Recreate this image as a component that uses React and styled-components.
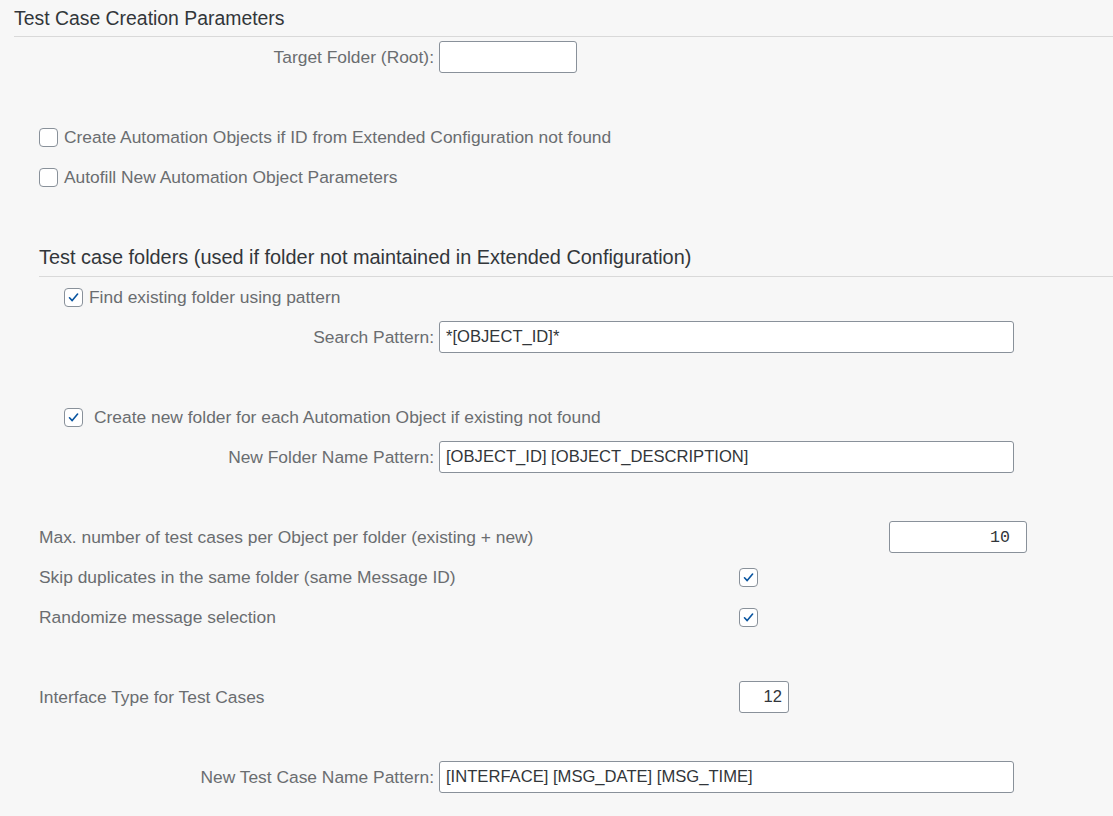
import React from 'react';
import styled, { createGlobalStyle } from 'styled-components';

const GlobalStyle = createGlobalStyle`
  html, body {
    margin: 0;
    padding: 0;
    background: #f7f7f7;
    font-family: "Liberation Sans", Arial, sans-serif;
  }
`;

const Page = styled.div`
  width: 1113px;
  height: 816px;
  overflow: hidden;
  background: #f7f7f7;
  color: #32363a;
`;

const Title = styled.div`
  margin-left: ${p => p.indent || 14}px;
  height: ${p => p.height || 37}px;
  display: flex;
  align-items: center;
  padding-top: ${p => p.padTop || 0}px;
  font-size: ${p => p.size || 19.4}px;
  color: #32363a;
  border-bottom: 1px solid #d9d9d9;
  box-sizing: border-box;
`;

const Row = styled.div`
  height: 40px;
  display: flex;
  align-items: center;
  padding-left: ${p => p.indent || 0}px;
  box-sizing: border-box;
  font-size: 17.4px;
  color: #6a6d70;
`;

const FormRow = styled.div`
  height: 40px;
  display: grid;
  grid-template-columns: 434px auto;
  column-gap: 5px;
  align-items: center;
  font-size: 17.4px;
`;

const SplitRow = styled.div`
  height: 40px;
  display: grid;
  grid-template-columns: ${p => p.at}px auto;
  align-items: center;
  padding-left: 39px;
  font-size: 17.4px;
`;

const Label = styled.label`
  color: #6a6d70;
  text-align: ${p => (p.left ? 'left' : 'right')};
  white-space: nowrap;
`;

const Input = styled.div`
  width: ${p => p.w}px;
  height: 32px;
  box-sizing: border-box;
  background: #fff;
  border: 1px solid #89919a;
  border-radius: 3px;
  display: flex;
  align-items: center;
  justify-content: ${p => (p.right ? 'flex-end' : 'flex-start')};
  padding: 0 ${p => p.pr ?? 6}px 0 6px;
  color: #32363a;
  font-size: 16.6px;
  font-family: ${p => (p.mono ? '"Liberation Mono", "DejaVu Sans Mono", monospace' : 'inherit')};
  white-space: nowrap;
`;

const Box = styled.span`
  width: 19px;
  height: 19px;
  box-sizing: border-box;
  border: 1px solid #89919a;
  border-radius: 4px;
  background: #fff;
  display: inline-flex;
  align-items: center;
  justify-content: center;
  flex-shrink: 0;
  margin-right: ${p => p.gap ?? 6}px;
`;

const Check = ({ checked, gap }) => (
  <Box gap={gap}>
    {checked && (
      <svg width="13" height="13" viewBox="0 0 13 13">
        <path d="M2.5 6.8 L5.2 9.6 L10.6 3" fill="none" stroke="#0854a0" strokeWidth="1.6" strokeLinecap="round" strokeLinejoin="round" />
      </svg>
    )}
  </Box>
);

const Spacer = styled.div`
  height: ${p => p.h}px;
`;

export default function App() {
  return (
    <Page>
      <GlobalStyle />
      <Title>Test Case Creation Parameters</Title>
      <FormRow>
        <Label>Target Folder (Root):</Label>
        <Input w={138} />
      </FormRow>
      <Spacer h={40} />
      <Row indent={39}>
        <Check />
        Create Automation Objects if ID from Extended Configuration not found
      </Row>
      <Row indent={39}>
        <Check />
        Autofill New Automation Object Parameters
      </Row>
      <Spacer h={40} />
      <Title indent={39} height={40} size={19.9} padTop={1}>
        Test case folders (used if folder not maintained in Extended Configuration)
      </Title>
      <Row indent={64}>
        <Check checked />
        Find existing folder using pattern
      </Row>
      <FormRow>
        <Label>Search Pattern:</Label>
        <Input w={575}>*[OBJECT_ID]*</Input>
      </FormRow>
      <Spacer h={40} />
      <Row indent={64}>
        <Check checked gap={11} />
        Create new folder for each Automation Object if existing not found
      </Row>
      <FormRow>
        <Label>New Folder Name Pattern:</Label>
        <Input w={575}>[OBJECT_ID] [OBJECT_DESCRIPTION]</Input>
      </FormRow>
      <Spacer h={40} />
      <SplitRow at={850}>
        <Label left>Max. number of test cases per Object per folder (existing + new)</Label>
        <Input w={138} right mono pr={16}>10</Input>
      </SplitRow>
      <SplitRow at={700}>
        <Label left>Skip duplicates in the same folder (same Message ID)</Label>
        <Check checked />
      </SplitRow>
      <SplitRow at={700}>
        <Label left>Randomize message selection</Label>
        <Check checked />
      </SplitRow>
      <Spacer h={40} />
      <SplitRow at={700}>
        <Label left>Interface Type for Test Cases</Label>
        <Input w={50} right pr={6}>12</Input>
      </SplitRow>
      <Spacer h={40} />
      <FormRow>
        <Label>New Test Case Name Pattern:</Label>
        <Input w={575}>[INTERFACE] [MSG_DATE] [MSG_TIME]</Input>
      </FormRow>
    </Page>
  );
}
